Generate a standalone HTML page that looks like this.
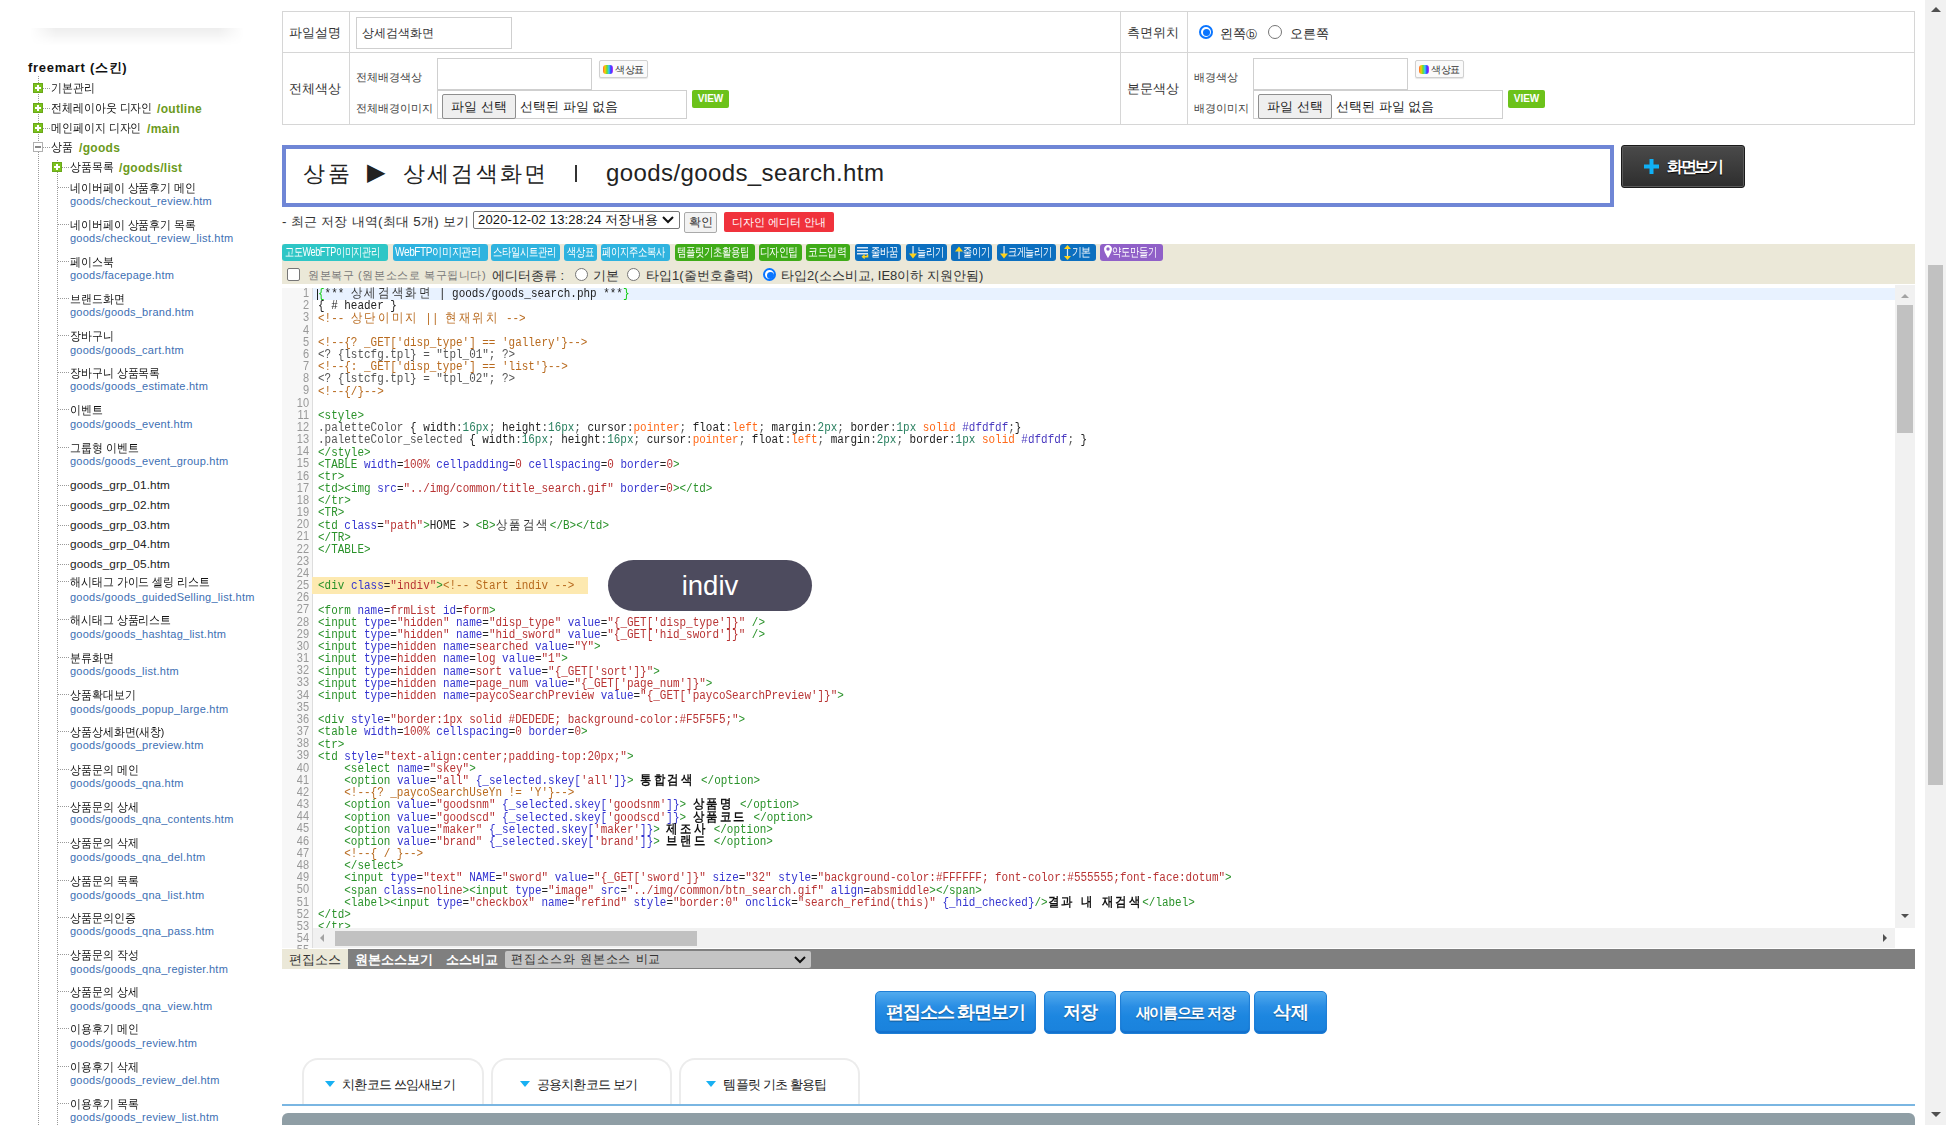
<!DOCTYPE html>
<html><head><meta charset="utf-8"><title>design</title><style>
*{box-sizing:border-box;margin:0;padding:0}
html,body{width:1946px;height:1125px;overflow:hidden;background:#fff;font-family:"Liberation Sans",sans-serif;color:#333;position:relative}
.a{position:absolute;white-space:nowrap}
/* sidebar */
.shadow{position:absolute;left:30px;top:28px;width:214px;height:18px;background:linear-gradient(rgba(0,0,0,.07),rgba(0,0,0,.025) 60%,rgba(0,0,0,0));-webkit-mask-image:linear-gradient(90deg,transparent,#000 12%,#000 88%,transparent)}
.root{font-weight:bold;font-size:13px;color:#111;letter-spacing:0.7px}
.vdot{position:absolute;width:0;border-left:1px dotted #9a9a9a}
.hdot{position:absolute;height:0;border-top:1px dotted #9a9a9a}
.pl{position:absolute;width:10px;height:10px;background:#7cc21e;border:1px solid #6aa81a}
.pl:before{content:"";position:absolute;left:1px;top:3px;width:6px;height:2px;background:#fff}
.pl:after{content:"";position:absolute;left:3px;top:1px;width:2px;height:6px;background:#fff}
.mi{position:absolute;width:10px;height:10px;background:#fff;border:1px solid #b0b0b0}
.mi:before{content:"";position:absolute;left:1px;top:3px;width:6px;height:2px;background:#888}
.t1{font-size:12px;font-weight:500;color:#111;transform:scaleX(.91);transform-origin:0 0}
.gr{color:#6b9a1c;font-weight:bold;font-size:12px;letter-spacing:0.3px}
.ti{font-size:11.5px;font-weight:500;color:#111;transform:scaleX(.91);transform-origin:0 0}.tg2{font-size:11.8px;color:#222;letter-spacing:0.1px}
.pa{font-size:11px;color:#3d6fb3;letter-spacing:0.25px}
/* table */
.tbl{position:absolute;left:282px;top:11px;width:1633px;height:114px;border:1px solid #d6d6d6}
.ln{position:absolute;background:#d6d6d6}
.inp{position:absolute;border:1px solid #cfcfcf;background:#fff}
.lab{font-size:13px;color:#333}
.slab{font-size:11px;color:#444}
.fbtn{position:absolute;background:#efefef;border:1px solid #8f8f8f;border-radius:2px;font-size:13px;color:#222;text-align:center}
.cbtn{position:absolute;height:18px;border:1px solid #d0d0d0;border-radius:2px;background:#fafafa;font-size:10px;color:#333;box-shadow:0 1px 1px rgba(0,0,0,.1)}
.vbtn{position:absolute;height:18px;width:37px;background:#6cc21a;border-radius:2px;color:#fff;font-weight:bold;font-size:10px;text-align:center;line-height:18px}
.radio{position:absolute;width:14px;height:14px;border-radius:50%;border:1px solid #767676;background:#fff}
.radio.on{border:2px solid #0a75ff}
.radio.on:after{content:"";position:absolute;left:1.5px;top:1.5px;width:7px;height:7px;border-radius:50%;background:#0a75ff}
/* title */
.title{position:absolute;left:282px;top:145px;width:1332px;height:62px;border:4px solid #6f86d6;background:#fff}
.ttx{font-size:22px;color:#222}
.vbig{position:absolute;left:1621px;top:145px;width:124px;height:43px;border-radius:3px;background:linear-gradient(#4a4a4a,#2e2e2e);border:1px solid #1a1a1a;box-shadow:inset 0 0 0 1px #5a5a5a;color:#fff;font-weight:bold;font-size:15px}
/* toolbar */
.tb{position:absolute;left:282px;top:244px;width:1633px;height:40px;background:#ebe8d8}
.tbn{white-space:nowrap;position:absolute;top:244px;height:17px;border-radius:3px;color:#fff;font-size:11px;line-height:17px;text-align:center;overflow:hidden;letter-spacing:-0.5px}
.cyan{background:#2ec6c6}.sky{background:#2fb3df}.grn{background:#3fab18}.blu{background:#0c6fbf}.pur{background:#9060c8}
/* editor */
.gut{position:absolute;left:282px;top:288px;width:31px;height:660px;background:#f7f7f7;border-right:1px solid #ddd}
.code{white-space:pre;font-family:"Liberation Mono",monospace;font-size:12.5px;color:#222;line-height:12px;height:12px;transform:scaleX(.876);transform-origin:0 0}
.lnum{position:absolute;left:279px;width:30px;text-align:right;font-family:"Liberation Sans",sans-serif;font-size:12.5px;color:#999;line-height:12px;transform:scaleX(.88);transform-origin:100% 0}
.k{letter-spacing:2.5px}.code .k{font-weight:bold;color:#111}.code .cm .k{font-weight:normal;color:inherit}
.tg{color:#2a922a}.at{color:#3636d0}.st{color:#b83434}.cm{color:#b86a1e}.nu{color:#2a8060}.ato{color:#ff6a1a}.hx{color:#4a3ac0}.mt{color:#555}.br{color:#1c1}
</style></head>
<body>
<div class="shadow"></div>
<div class="a root" style="left:28px;top:59px">freemart (스킨)</div>
<div class="vdot" style="left:38px;top:76px;height:1049px"></div>
<div class="hdot" style="left:43px;top:88px;width:7px"></div>
<div class="pl" style="left:33px;top:83px"></div>
<div class="a t1" style="left:51px;top:80px">기본관리</div>
<div class="hdot" style="left:43px;top:108px;width:7px"></div>
<div class="pl" style="left:33px;top:103px"></div>
<div class="a t1" style="left:51px;top:100px">전체레이아웃 디자인</div>
<div class="a gr" style="left:157px;top:102px">/outline</div>
<div class="hdot" style="left:43px;top:128px;width:7px"></div>
<div class="pl" style="left:33px;top:123px"></div>
<div class="a t1" style="left:51px;top:120px">메인페이지 디자인</div>
<div class="a gr" style="left:147px;top:122px">/main</div>
<div class="hdot" style="left:43px;top:147px;width:7px"></div>
<div class="mi" style="left:33px;top:142px"></div>
<div class="a t1" style="left:51px;top:139px">상품</div>
<div class="a gr" style="left:79px;top:141px">/goods</div>
<div class="vdot" style="left:57px;top:160px;height:965px"></div>
<div class="hdot" style="left:62px;top:167px;width:7px"></div>
<div class="pl" style="left:52px;top:162px"></div>
<div class="a t1" style="left:70px;top:159px">상품목록</div>
<div class="a gr" style="left:119px;top:161px">/goods/list</div>
<div class="hdot" style="left:58px;top:187px;width:11px"></div>
<div class="a ti" style="left:70px;top:181px">네이버페이 상품후기 메인</div>
<div class="a pa" style="left:70px;top:195px">goods/checkout_review.htm</div>
<div class="hdot" style="left:58px;top:224px;width:11px"></div>
<div class="a ti" style="left:70px;top:218px">네이버페이 상품후기 목록</div>
<div class="a pa" style="left:70px;top:232px">goods/checkout_review_list.htm</div>
<div class="hdot" style="left:58px;top:261px;width:11px"></div>
<div class="a ti" style="left:70px;top:255px">페이스북</div>
<div class="a pa" style="left:70px;top:269px">goods/facepage.htm</div>
<div class="hdot" style="left:58px;top:298px;width:11px"></div>
<div class="a ti" style="left:70px;top:292px">브랜드화면</div>
<div class="a pa" style="left:70px;top:306px">goods/goods_brand.htm</div>
<div class="hdot" style="left:58px;top:335px;width:11px"></div>
<div class="a ti" style="left:70px;top:329px">장바구니</div>
<div class="a pa" style="left:70px;top:344px">goods/goods_cart.htm</div>
<div class="hdot" style="left:58px;top:372px;width:11px"></div>
<div class="a ti" style="left:70px;top:366px">장바구니 상품목록</div>
<div class="a pa" style="left:70px;top:380px">goods/goods_estimate.htm</div>
<div class="hdot" style="left:58px;top:409px;width:11px"></div>
<div class="a ti" style="left:70px;top:403px">이벤트</div>
<div class="a pa" style="left:70px;top:418px">goods/goods_event.htm</div>
<div class="hdot" style="left:58px;top:447px;width:11px"></div>
<div class="a ti" style="left:70px;top:441px">그룹형 이벤트</div>
<div class="a pa" style="left:70px;top:455px">goods/goods_event_group.htm</div>
<div class="hdot" style="left:58px;top:485px;width:11px"></div>
<div class="a tg2" style="left:70px;top:478px">goods_grp_01.htm</div>
<div class="hdot" style="left:58px;top:505px;width:11px"></div>
<div class="a tg2" style="left:70px;top:498px">goods_grp_02.htm</div>
<div class="hdot" style="left:58px;top:525px;width:11px"></div>
<div class="a tg2" style="left:70px;top:518px">goods_grp_03.htm</div>
<div class="hdot" style="left:58px;top:544px;width:11px"></div>
<div class="a tg2" style="left:70px;top:537px">goods_grp_04.htm</div>
<div class="hdot" style="left:58px;top:564px;width:11px"></div>
<div class="a tg2" style="left:70px;top:557px">goods_grp_05.htm</div>
<div class="hdot" style="left:58px;top:581px;width:11px"></div>
<div class="a ti" style="left:70px;top:575px">해시태그 가이드 셀링 리스트</div>
<div class="a pa" style="left:70px;top:591px">goods/goods_guidedSelling_list.htm</div>
<div class="hdot" style="left:58px;top:619px;width:11px"></div>
<div class="a ti" style="left:70px;top:613px">해시태그 상품리스트</div>
<div class="a pa" style="left:70px;top:628px">goods/goods_hashtag_list.htm</div>
<div class="hdot" style="left:58px;top:657px;width:11px"></div>
<div class="a ti" style="left:70px;top:651px">분류화면</div>
<div class="a pa" style="left:70px;top:665px">goods/goods_list.htm</div>
<div class="hdot" style="left:58px;top:694px;width:11px"></div>
<div class="a ti" style="left:70px;top:688px">상품확대보기</div>
<div class="a pa" style="left:70px;top:703px">goods/goods_popup_large.htm</div>
<div class="hdot" style="left:58px;top:731px;width:11px"></div>
<div class="a ti" style="left:70px;top:725px">상품상세화면(새창)</div>
<div class="a pa" style="left:70px;top:739px">goods/goods_preview.htm</div>
<div class="hdot" style="left:58px;top:769px;width:11px"></div>
<div class="a ti" style="left:70px;top:763px">상품문의 메인</div>
<div class="a pa" style="left:70px;top:777px">goods/goods_qna.htm</div>
<div class="hdot" style="left:58px;top:806px;width:11px"></div>
<div class="a ti" style="left:70px;top:800px">상품문의 상세</div>
<div class="a pa" style="left:70px;top:813px">goods/goods_qna_contents.htm</div>
<div class="hdot" style="left:58px;top:842px;width:11px"></div>
<div class="a ti" style="left:70px;top:836px">상품문의 삭제</div>
<div class="a pa" style="left:70px;top:851px">goods/goods_qna_del.htm</div>
<div class="hdot" style="left:58px;top:880px;width:11px"></div>
<div class="a ti" style="left:70px;top:874px">상품문의 목록</div>
<div class="a pa" style="left:70px;top:889px">goods/goods_qna_list.htm</div>
<div class="hdot" style="left:58px;top:917px;width:11px"></div>
<div class="a ti" style="left:70px;top:911px">상품문의인증</div>
<div class="a pa" style="left:70px;top:925px">goods/goods_qna_pass.htm</div>
<div class="hdot" style="left:58px;top:954px;width:11px"></div>
<div class="a ti" style="left:70px;top:948px">상품문의 작성</div>
<div class="a pa" style="left:70px;top:963px">goods/goods_qna_register.htm</div>
<div class="hdot" style="left:58px;top:991px;width:11px"></div>
<div class="a ti" style="left:70px;top:985px">상품문의 상세</div>
<div class="a pa" style="left:70px;top:1000px">goods/goods_qna_view.htm</div>
<div class="hdot" style="left:58px;top:1028px;width:11px"></div>
<div class="a ti" style="left:70px;top:1022px">이용후기 메인</div>
<div class="a pa" style="left:70px;top:1037px">goods/goods_review.htm</div>
<div class="hdot" style="left:58px;top:1066px;width:11px"></div>
<div class="a ti" style="left:70px;top:1060px">이용후기 삭제</div>
<div class="a pa" style="left:70px;top:1074px">goods/goods_review_del.htm</div>
<div class="hdot" style="left:58px;top:1103px;width:11px"></div>
<div class="a ti" style="left:70px;top:1097px">이용후기 목록</div>
<div class="a pa" style="left:70px;top:1111px">goods/goods_review_list.htm</div>
<div class="tbl"></div>
<div class="ln" style="left:349px;top:11px;width:1px;height:114px"></div>
<div class="ln" style="left:1120px;top:11px;width:1px;height:114px"></div>
<div class="ln" style="left:1187px;top:11px;width:1px;height:114px"></div>
<div class="ln" style="left:282px;top:52px;width:1633px;height:1px"></div>
<div class="a lab" style="left:289px;top:24px">파일설명</div>
<div class="a lab" style="left:289px;top:80px">전체색상</div>
<div class="a lab" style="left:1127px;top:24px">측면위치</div>
<div class="a lab" style="left:1127px;top:80px">본문색상</div>
<div class="inp" style="left:356px;top:17px;width:156px;height:32px"></div>
<div class="a" style="left:362px;top:25px;font-size:12px;color:#333">상세검색화면</div>
<div class="a slab" style="left:356px;top:70px">전체배경색상</div>
<div class="a slab" style="left:356px;top:101px">전체배경이미지</div>
<div class="inp" style="left:437px;top:58px;width:155px;height:32px"></div>
<div class="inp" style="left:437px;top:90px;width:250px;height:29px"></div>
<div class="fbtn" style="left:442px;top:94px;width:74px;height:25px;line-height:23px">파일 선택</div>
<div class="a" style="left:520px;top:98px;font-size:13px;color:#222">선택된 파일 없음</div>
<div class="cbtn" style="left:599px;top:60px;width:49px"><span style="position:absolute;left:3px;top:4px;width:10px;height:9px;border-radius:3px;background:linear-gradient(90deg,#f63,#fc0,#6d3,#3cf,#33f,#c3f)"></span><span style="position:absolute;left:15px;top:2px;letter-spacing:-0.5px">색상표</span></div>
<div class="vbtn" style="left:692px;top:90px">VIEW</div>
<div class="a slab" style="left:1194px;top:70px">배경색상</div>
<div class="a slab" style="left:1194px;top:101px">배경이미지</div>
<div class="inp" style="left:1253px;top:58px;width:155px;height:32px"></div>
<div class="inp" style="left:1253px;top:90px;width:250px;height:29px"></div>
<div class="fbtn" style="left:1258px;top:94px;width:74px;height:25px;line-height:23px">파일 선택</div>
<div class="a" style="left:1336px;top:98px;font-size:13px;color:#222">선택된 파일 없음</div>
<div class="cbtn" style="left:1415px;top:60px;width:49px"><span style="position:absolute;left:3px;top:4px;width:10px;height:9px;border-radius:3px;background:linear-gradient(90deg,#f63,#fc0,#6d3,#3cf,#33f,#c3f)"></span><span style="position:absolute;left:15px;top:2px;letter-spacing:-0.5px">색상표</span></div>
<div class="vbtn" style="left:1508px;top:90px">VIEW</div>
<div class="radio on" style="left:1199px;top:25px"></div>
<div class="a" style="left:1220px;top:25px;font-size:13px;color:#222">왼쪽<span style="font-size:11px">ⓑ</span></div>
<div class="radio" style="left:1268px;top:25px"></div>
<div class="a" style="left:1290px;top:25px;font-size:13px;color:#222">오른쪽</div>
<div class="title"></div>
<div class="a ttx" style="left:303px;top:159px;letter-spacing:3px">상품</div>
<div class="a ttx" style="left:367px;top:158px;font-size:24px">▶</div>
<div class="a ttx" style="left:403px;top:159px;letter-spacing:2.2px">상세검색화면</div>
<div class="a" style="left:575px;top:165px;width:2px;height:17px;background:#333"></div>
<div class="a ttx" style="left:606px;top:159px;font-size:24px;letter-spacing:0.4px">goods/goods_search.htm</div>
<div class="vbig"><svg style="position:absolute;left:22px;top:13px" width="15" height="15" viewBox="0 0 15 15"><path d="M5.5 0h4v5.5H15v4H9.5V15h-4V9.5H0v-4h5.5z" fill="#10b0f5"/></svg><span style="position:absolute;left:45px;top:11px;font-size:16px;letter-spacing:-2.4px;text-shadow:0 1px 1px #000">화면보기</span></div>
<div class="a" style="left:282px;top:213px;font-size:13.4px;letter-spacing:0.25px;color:#333">- 최근 저장 내역(최대 5개) 보기</div>
<div class="a" style="left:473px;top:211px;width:207px;height:18px;border:1px solid #767676;border-radius:2px;font-size:13px;letter-spacing:0.15px;color:#111;padding-left:4px;line-height:16px">2020-12-02 13:28:24 저장내용<svg style="position:absolute;left:188px;top:4px" width="12" height="8" viewBox="0 0 12 8"><path d="M1 1l5 5 5-5" stroke="#111" stroke-width="2" fill="none"/></svg></div>
<div class="a" style="left:684px;top:212px;width:33px;height:21px;border:1px solid #aaa;background:#f2f2f2;border-radius:2px;font-size:12px;color:#333;text-align:center;line-height:19px">확인</div>
<div class="a" style="left:724px;top:212px;width:110px;height:20px;background:#f0323c;border-radius:2px;font-size:11px;color:#fff;text-align:center;line-height:20px">디자인 에디터 안내</div>
<div class="tb"></div>
<div class="tbn cyan" style="left:282px;width:106px"><span style="position:absolute;left:2.9px;top:0;transform:scaleX(0.758);transform-origin:0 0;font-size:12px">고도WebFTP이미지관리</span></div>
<div class="tbn sky" style="left:393px;width:95px"><span style="position:absolute;left:2.1px;top:0;transform:scaleX(0.842);transform-origin:0 0;font-size:12px">WebFTP이미지관리</span></div>
<div class="tbn sky" style="left:491px;width:69px"><span style="position:absolute;left:2.0px;top:0;transform:scaleX(0.780);transform-origin:0 0;font-size:12px">스타일시트관리</span></div>
<div class="tbn sky" style="left:564px;width:33px"><span style="position:absolute;left:2.5px;top:0;transform:scaleX(0.772);transform-origin:0 0;font-size:12px">색상표</span></div>
<div class="tbn sky" style="left:601px;width:69px"><span style="position:absolute;left:1.3px;top:0;transform:scaleX(0.776);transform-origin:0 0;font-size:12px">페이지주소복사</span></div>
<div class="tbn grn" style="left:675px;width:80px"><span style="position:absolute;left:2.2px;top:0;transform:scaleX(0.787);transform-origin:0 0;font-size:12px">템플릿기초활용팁</span></div>
<div class="tbn grn" style="left:759px;width:43px"><span style="position:absolute;left:1.3px;top:0;transform:scaleX(0.823);transform-origin:0 0;font-size:12px">디자인팁</span></div>
<div class="tbn grn" style="left:806px;width:44px"><span style="position:absolute;left:1.8px;top:0;transform:scaleX(0.827);transform-origin:0 0;font-size:12px">코드입력</span></div>
<div class="tbn blu" style="left:855px;width:46px"><span style="position:absolute;left:15.9px;top:0;transform:scaleX(0.775);transform-origin:0 0;font-size:12px">줄바꿈</span></div>
<div class="tbn blu" style="left:906px;width:41px"><span style="position:absolute;left:11.3px;top:0;transform:scaleX(0.767);transform-origin:0 0;font-size:12px">늘리기</span></div>
<div class="tbn blu" style="left:951px;width:41px"><span style="position:absolute;left:11.7px;top:0;transform:scaleX(0.761);transform-origin:0 0;font-size:12px">줄이기</span></div>
<div class="tbn blu" style="left:997px;width:59px"><span style="position:absolute;left:11.2px;top:0;transform:scaleX(0.755);transform-origin:0 0;font-size:12px">크게늘리기</span></div>
<div class="tbn blu" style="left:1060px;width:36px"><span style="position:absolute;left:11.5px;top:0;transform:scaleX(0.825);transform-origin:0 0;font-size:12px">기본</span></div>
<div class="tbn pur" style="left:1100px;width:63px"><span style="position:absolute;left:12.3px;top:0;transform:scaleX(0.773);transform-origin:0 0;font-size:12px">약도만들기</span></div>
<svg class="a" style="left:857px;top:246px" width="14" height="14" viewBox="0 0 14 14"><rect x="0" y="1" width="11" height="1.5" fill="#d6e6f6"/><rect x="0" y="4" width="11" height="1.5" fill="#d6e6f6"/><rect x="0" y="7" width="11" height="1.5" fill="#d6e6f6"/><path d="M10.5 8.5v2.2H7" stroke="#ffd21a" stroke-width="1.6" fill="none"/><path d="M4.5 10.7l3.2-2.6v5.2z" fill="#ffd21a"/></svg>
<svg class="a" style="left:909px;top:246px" width="8" height="13" viewBox="0 0 8 13"><rect x="3.4" y="0" width="1.3" height="8" fill="#d6e6f6"/><path d="M4 12.5L0 7.5h8z" fill="#ffd21a"/></svg>
<svg class="a" style="left:955px;top:246px" width="8" height="13" viewBox="0 0 8 13"><rect x="3.4" y="5" width="1.3" height="8" fill="#d6e6f6"/><path d="M4 0.5L0 5.5h8z" fill="#ffd21a"/></svg>
<svg class="a" style="left:1000px;top:246px" width="8" height="13" viewBox="0 0 8 13"><rect x="3.4" y="0" width="1.3" height="8" fill="#d6e6f6"/><path d="M4 12.5L0 7.5h8z" fill="#ffd21a"/></svg>
<svg class="a" style="left:1064px;top:245px" width="7" height="15" viewBox="0 0 7 15"><rect x="2.9" y="3" width="1.2" height="9" fill="#d6e6f6"/><path d="M3.5 0L0 4h7zM3.5 15L0 11h7z" fill="#ffd21a"/></svg>
<svg class="a" style="left:1104px;top:245px" width="8" height="13" viewBox="0 0 8 13"><path d="M4 0C1.8 0 0 1.8 0 4c0 3 4 9 4 9s4-6 4-9c0-2.2-1.8-4-4-4zm0 2.3a1.7 1.7 0 110 3.4 1.7 1.7 0 010-3.4z" fill="#fff"/></svg>
<div class="a" style="left:287px;top:268px;width:13px;height:13px;border:1px solid #767676;border-radius:2px;background:#fff"></div>
<div class="a" style="left:308px;top:268px;font-size:11px;letter-spacing:0.6px;color:#777">원본복구 (원본소스로 복구됩니다)</div>
<div class="a" style="left:492px;top:267px;font-size:13px;color:#333">에디터종류 :</div>
<div class="radio" style="left:575px;top:268px;width:13px;height:13px"></div>
<div class="a" style="left:593px;top:267px;font-size:13px;color:#333">기본</div>
<div class="radio" style="left:627px;top:268px;width:13px;height:13px"></div>
<div class="a" style="left:646px;top:267px;font-size:13px;color:#333">타입1(줄번호출력)</div>
<div class="radio on" style="left:763px;top:268px;width:13px;height:13px"></div>
<div class="a" style="left:781px;top:267px;font-size:13px;color:#333">타입2(소스비교, IE8이하 지원안됨)</div>
<div class="gut"></div>
<div class="a" style="left:313px;top:288px;width:1582px;height:12px;background:#e8f2ff"></div>
<div class="a" style="left:312px;top:577px;width:276px;height:17px;background:#fde9b0"></div>
<div class="lnum" style="top:287.00px">1</div>
<div class="a code" style="left:318px;top:288.30px"><span style="position:absolute;left:-1px;top:1px;width:1px;height:11px;background:#000"></span><span class="br">{</span>*** <span class="k" style="font-weight:normal;color:#333">상세검색화면</span> | goods/goods_search.php ***<span class="br">}</span></div>
<div class="lnum" style="top:299.17px">2</div>
<div class="a code" style="left:318px;top:300.47px">{ # header }</div>
<div class="lnum" style="top:311.34px">3</div>
<div class="a code" style="left:318px;top:312.64px"><span class="cm">&lt;!-- <span class="k">상단이미지</span> || <span class="k">현재위치</span> --&gt;</span></div>
<div class="lnum" style="top:323.51px">4</div>
<div class="lnum" style="top:335.68px">5</div>
<div class="a code" style="left:318px;top:336.98px"><span class="cm">&lt;!--{? _GET['disp_type'] == 'gallery'}--&gt;</span></div>
<div class="lnum" style="top:347.85px">6</div>
<div class="a code" style="left:318px;top:349.15px"><span class="mt">&lt;? {lstcfg.tpl} = "tpl_01"; ?&gt;</span></div>
<div class="lnum" style="top:360.02px">7</div>
<div class="a code" style="left:318px;top:361.32px"><span class="cm">&lt;!--{: _GET['disp_type'] == 'list'}--&gt;</span></div>
<div class="lnum" style="top:372.19px">8</div>
<div class="a code" style="left:318px;top:373.49px"><span class="mt">&lt;? {lstcfg.tpl} = "tpl_02"; ?&gt;</span></div>
<div class="lnum" style="top:384.36px">9</div>
<div class="a code" style="left:318px;top:385.66px"><span class="cm">&lt;!--{/}--&gt;</span></div>
<div class="lnum" style="top:396.53px">10</div>
<div class="lnum" style="top:408.70px">11</div>
<div class="a code" style="left:318px;top:410.00px"><span class="tg">&lt;style</span><span class="tg">&gt;</span></div>
<div class="lnum" style="top:420.87px">12</div>
<div class="a code" style="left:318px;top:422.17px"><span class="mt">.paletteColor</span> { width<span class="mt">:</span><span class="nu">16px</span><span class="mt">;</span> height<span class="mt">:</span><span class="nu">16px</span><span class="mt">;</span> cursor<span class="mt">:</span><span class="ato">pointer</span><span class="mt">;</span> float<span class="mt">:</span><span class="ato">left</span><span class="mt">;</span> margin<span class="mt">:</span><span class="nu">2px</span><span class="mt">;</span> border<span class="mt">:</span><span class="nu">1px</span> <span class="ato">solid</span> <span class="hx">#dfdfdf</span><span class="mt">;</span>}</div>
<div class="lnum" style="top:433.04px">13</div>
<div class="a code" style="left:318px;top:434.34px"><span class="mt">.paletteColor_selected</span> { width<span class="mt">:</span><span class="nu">16px</span><span class="mt">;</span> height<span class="mt">:</span><span class="nu">16px</span><span class="mt">;</span> cursor<span class="mt">:</span><span class="ato">pointer</span><span class="mt">;</span> float<span class="mt">:</span><span class="ato">left</span><span class="mt">;</span> margin<span class="mt">:</span><span class="nu">2px</span><span class="mt">;</span> border<span class="mt">:</span><span class="nu">1px</span> <span class="ato">solid</span> <span class="hx">#dfdfdf</span><span class="mt">;</span> }</div>
<div class="lnum" style="top:445.21px">14</div>
<div class="a code" style="left:318px;top:446.51px"><span class="tg">&lt;/style</span><span class="tg">&gt;</span></div>
<div class="lnum" style="top:457.38px">15</div>
<div class="a code" style="left:318px;top:458.68px"><span class="tg">&lt;TABLE</span> <span class="at">width</span>=<span class="st">100%</span> <span class="at">cellpadding</span>=<span class="st">0</span> <span class="at">cellspacing</span>=<span class="st">0</span> <span class="at">border</span>=<span class="st">0</span><span class="tg">&gt;</span></div>
<div class="lnum" style="top:469.55px">16</div>
<div class="a code" style="left:318px;top:470.85px"><span class="tg">&lt;tr</span><span class="tg">&gt;</span></div>
<div class="lnum" style="top:481.72px">17</div>
<div class="a code" style="left:318px;top:483.02px"><span class="tg">&lt;td</span><span class="tg">&gt;</span><span class="tg">&lt;img</span> <span class="at">src</span>=<span class="st">"../img/common/title_search.gif"</span> <span class="at">border</span>=<span class="st">0</span><span class="tg">&gt;</span><span class="tg">&lt;/td</span><span class="tg">&gt;</span></div>
<div class="lnum" style="top:493.89px">18</div>
<div class="a code" style="left:318px;top:495.19px"><span class="tg">&lt;/tr</span><span class="tg">&gt;</span></div>
<div class="lnum" style="top:506.06px">19</div>
<div class="a code" style="left:318px;top:507.36px"><span class="tg">&lt;TR</span><span class="tg">&gt;</span></div>
<div class="lnum" style="top:518.23px">20</div>
<div class="a code" style="left:318px;top:519.53px"><span class="tg">&lt;td</span> <span class="at">class</span>=<span class="st">"path"</span><span class="tg">&gt;</span>HOME &gt; <span class="tg">&lt;B</span><span class="tg">&gt;</span><span class="k" style="font-weight:normal;color:#333">상품검색</span><span class="tg">&lt;/B</span><span class="tg">&gt;</span><span class="tg">&lt;/td</span><span class="tg">&gt;</span></div>
<div class="lnum" style="top:530.40px">21</div>
<div class="a code" style="left:318px;top:531.70px"><span class="tg">&lt;/TR</span><span class="tg">&gt;</span></div>
<div class="lnum" style="top:542.57px">22</div>
<div class="a code" style="left:318px;top:543.87px"><span class="tg">&lt;/TABLE</span><span class="tg">&gt;</span></div>
<div class="lnum" style="top:554.74px">23</div>
<div class="lnum" style="top:566.91px">24</div>
<div class="lnum" style="top:579.08px">25</div>
<div class="a code" style="left:318px;top:580.38px"><span class="tg">&lt;div</span> <span class="at">class</span>=<span class="st">"indiv"</span><span class="tg">&gt;</span><span class="cm">&lt;!-- Start indiv --&gt;</span></div>
<div class="lnum" style="top:591.25px">26</div>
<div class="lnum" style="top:603.42px">27</div>
<div class="a code" style="left:318px;top:604.72px"><span class="tg">&lt;form</span> <span class="at">name</span>=<span class="st">frmList</span> <span class="at">id</span>=<span class="st">form</span><span class="tg">&gt;</span></div>
<div class="lnum" style="top:615.59px">28</div>
<div class="a code" style="left:318px;top:616.89px"><span class="tg">&lt;input</span> <span class="at">type</span>=<span class="st">"hidden"</span> <span class="at">name</span>=<span class="st">"disp_type"</span> <span class="at">value</span>=<span class="st">"{_GET['disp_type']}"</span> <span class="tg">/&gt;</span></div>
<div class="lnum" style="top:627.76px">29</div>
<div class="a code" style="left:318px;top:629.06px"><span class="tg">&lt;input</span> <span class="at">type</span>=<span class="st">"hidden"</span> <span class="at">name</span>=<span class="st">"hid_sword"</span> <span class="at">value</span>=<span class="st">"{_GET['hid_sword']}"</span> <span class="tg">/&gt;</span></div>
<div class="lnum" style="top:639.93px">30</div>
<div class="a code" style="left:318px;top:641.23px"><span class="tg">&lt;input</span> <span class="at">type</span>=<span class="st">hidden</span> <span class="at">name</span>=<span class="st">searched</span> <span class="at">value</span>=<span class="st">"Y"</span><span class="tg">&gt;</span></div>
<div class="lnum" style="top:652.10px">31</div>
<div class="a code" style="left:318px;top:653.40px"><span class="tg">&lt;input</span> <span class="at">type</span>=<span class="st">hidden</span> <span class="at">name</span>=<span class="st">log</span> <span class="at">value</span>=<span class="st">"1"</span><span class="tg">&gt;</span></div>
<div class="lnum" style="top:664.27px">32</div>
<div class="a code" style="left:318px;top:665.57px"><span class="tg">&lt;input</span> <span class="at">type</span>=<span class="st">hidden</span> <span class="at">name</span>=<span class="st">sort</span> <span class="at">value</span>=<span class="st">"{_GET['sort']}"</span><span class="tg">&gt;</span></div>
<div class="lnum" style="top:676.44px">33</div>
<div class="a code" style="left:318px;top:677.74px"><span class="tg">&lt;input</span> <span class="at">type</span>=<span class="st">hidden</span> <span class="at">name</span>=<span class="st">page_num</span> <span class="at">value</span>=<span class="st">"{_GET['page_num']}"</span><span class="tg">&gt;</span></div>
<div class="lnum" style="top:688.61px">34</div>
<div class="a code" style="left:318px;top:689.91px"><span class="tg">&lt;input</span> <span class="at">type</span>=<span class="st">hidden</span> <span class="at">name</span>=<span class="st">paycoSearchPreview</span> <span class="at">value</span>=<span class="st">"{_GET['paycoSearchPreview']}"</span><span class="tg">&gt;</span></div>
<div class="lnum" style="top:700.78px">35</div>
<div class="lnum" style="top:712.95px">36</div>
<div class="a code" style="left:318px;top:714.25px"><span class="tg">&lt;div</span> <span class="at">style</span>=<span class="st">"border:1px solid #DEDEDE; background-color:#F5F5F5;"</span><span class="tg">&gt;</span></div>
<div class="lnum" style="top:725.12px">37</div>
<div class="a code" style="left:318px;top:726.42px"><span class="tg">&lt;table</span> <span class="at">width</span>=<span class="st">100%</span> <span class="at">cellspacing</span>=<span class="st">0</span> <span class="at">border</span>=<span class="st">0</span><span class="tg">&gt;</span></div>
<div class="lnum" style="top:737.29px">38</div>
<div class="a code" style="left:318px;top:738.59px"><span class="tg">&lt;tr</span><span class="tg">&gt;</span></div>
<div class="lnum" style="top:749.46px">39</div>
<div class="a code" style="left:318px;top:750.76px"><span class="tg">&lt;td</span> <span class="at">style</span>=<span class="st">"text-align:center;padding-top:20px;"</span><span class="tg">&gt;</span></div>
<div class="lnum" style="top:761.63px">40</div>
<div class="a code" style="left:318px;top:762.93px">    <span class="tg">&lt;select</span> <span class="at">name</span>=<span class="st">"skey"</span><span class="tg">&gt;</span></div>
<div class="lnum" style="top:773.80px">41</div>
<div class="a code" style="left:318px;top:775.10px">    <span class="tg">&lt;option</span> <span class="at">value</span>=<span class="st">"all"</span> <span class="at">{_selected.skey[</span><span class="st">'all'</span><span class="at">]}</span><span class="tg">&gt;</span> <span class="k">통합검색</span> <span class="tg">&lt;/option</span><span class="tg">&gt;</span></div>
<div class="lnum" style="top:785.97px">42</div>
<div class="a code" style="left:318px;top:787.27px">    <span class="cm">&lt;!--{? _paycoSearchUseYn != 'Y'}--&gt;</span></div>
<div class="lnum" style="top:798.14px">43</div>
<div class="a code" style="left:318px;top:799.44px">    <span class="tg">&lt;option</span> <span class="at">value</span>=<span class="st">"goodsnm"</span> <span class="at">{_selected.skey[</span><span class="st">'goodsnm'</span><span class="at">]}</span><span class="tg">&gt;</span> <span class="k">상품명</span> <span class="tg">&lt;/option</span><span class="tg">&gt;</span></div>
<div class="lnum" style="top:810.31px">44</div>
<div class="a code" style="left:318px;top:811.61px">    <span class="tg">&lt;option</span> <span class="at">value</span>=<span class="st">"goodscd"</span> <span class="at">{_selected.skey[</span><span class="st">'goodscd'</span><span class="at">]}</span><span class="tg">&gt;</span> <span class="k">상품코드</span> <span class="tg">&lt;/option</span><span class="tg">&gt;</span></div>
<div class="lnum" style="top:822.48px">45</div>
<div class="a code" style="left:318px;top:823.78px">    <span class="tg">&lt;option</span> <span class="at">value</span>=<span class="st">"maker"</span> <span class="at">{_selected.skey[</span><span class="st">'maker'</span><span class="at">]}</span><span class="tg">&gt;</span> <span class="k">제조사</span> <span class="tg">&lt;/option</span><span class="tg">&gt;</span></div>
<div class="lnum" style="top:834.65px">46</div>
<div class="a code" style="left:318px;top:835.95px">    <span class="tg">&lt;option</span> <span class="at">value</span>=<span class="st">"brand"</span> <span class="at">{_selected.skey[</span><span class="st">'brand'</span><span class="at">]}</span><span class="tg">&gt;</span> <span class="k">브랜드</span> <span class="tg">&lt;/option</span><span class="tg">&gt;</span></div>
<div class="lnum" style="top:846.82px">47</div>
<div class="a code" style="left:318px;top:848.12px">    <span class="cm">&lt;!--{ / }--&gt;</span></div>
<div class="lnum" style="top:858.99px">48</div>
<div class="a code" style="left:318px;top:860.29px">    <span class="tg">&lt;/select</span><span class="tg">&gt;</span></div>
<div class="lnum" style="top:871.16px">49</div>
<div class="a code" style="left:318px;top:872.46px">    <span class="tg">&lt;input</span> <span class="at">type</span>=<span class="st">"text"</span> <span class="at">NAME</span>=<span class="st">"sword"</span> <span class="at">value</span>=<span class="st">"{_GET['sword']}"</span> <span class="at">size</span>=<span class="st">"32"</span> <span class="at">style</span>=<span class="st">"background-color:#FFFFFF; font-color:#555555;font-face:dotum"</span><span class="tg">&gt;</span></div>
<div class="lnum" style="top:883.33px">50</div>
<div class="a code" style="left:318px;top:884.63px">    <span class="tg">&lt;span</span> <span class="at">class</span>=<span class="st">noline</span><span class="tg">&gt;</span><span class="tg">&lt;input</span> <span class="at">type</span>=<span class="st">"image"</span> <span class="at">src</span>=<span class="st">"../img/common/btn_search.gif"</span> <span class="at">align</span>=<span class="st">absmiddle</span><span class="tg">&gt;</span><span class="tg">&lt;/span</span><span class="tg">&gt;</span></div>
<div class="lnum" style="top:895.50px">51</div>
<div class="a code" style="left:318px;top:896.80px">    <span class="tg">&lt;label</span><span class="tg">&gt;</span><span class="tg">&lt;input</span> <span class="at">type</span>=<span class="st">"checkbox"</span> <span class="at">name</span>=<span class="st">"refind"</span> <span class="at">style</span>=<span class="st">"border:0"</span> <span class="at">onclick</span>=<span class="st">"search_refind(this)"</span> <span class="at">{_hid_checked}</span><span class="tg">/&gt;</span><span class="k">결과</span> <span class="k">내</span> <span class="k">재검색</span><span class="tg">&lt;/label</span><span class="tg">&gt;</span></div>
<div class="lnum" style="top:907.67px">52</div>
<div class="a code" style="left:318px;top:908.97px"><span class="tg">&lt;/td</span><span class="tg">&gt;</span></div>
<div class="lnum" style="top:919.84px">53</div>
<div class="a code" style="left:318px;top:921.14px"><span class="tg">&lt;/tr</span><span class="tg">&gt;</span></div>
<div class="lnum" style="top:932.01px">54</div>
<div class="lnum" style="top:944.18px">55</div>
<div class="a" style="left:1895px;top:285px;width:20px;height:643px;background:#f1f1f1"></div>
<div class="a" style="left:1897px;top:305px;width:16px;height:128px;background:#c1c1c1"></div>
<div class="a" style="left:1901px;top:294px;width:0;height:0;border-left:4px solid transparent;border-right:4px solid transparent;border-bottom:4px solid #a3a3a3"></div>
<div class="a" style="left:1901px;top:914px;width:0;height:0;border-left:4px solid transparent;border-right:4px solid transparent;border-top:4px solid #505050"></div>
<div class="a" style="left:313px;top:928px;width:1582px;height:20px;background:#f1f1f1"></div>
<div class="a" style="left:335px;top:931px;width:362px;height:15px;background:#c1c1c1"></div>
<div class="a" style="left:320px;top:934px;width:0;height:0;border-top:4px solid transparent;border-bottom:4px solid transparent;border-right:4px solid #a3a3a3"></div>
<div class="a" style="left:1883px;top:934px;width:0;height:0;border-top:4px solid transparent;border-bottom:4px solid transparent;border-left:4px solid #505050"></div>
<div class="a" style="left:282px;top:949px;width:1633px;height:20px;background:#7f7f7f"></div>
<div class="a" style="left:282px;top:949px;width:66px;height:20px;background:#ebe8d8"></div>
<div class="a" style="left:289px;top:951px;font-size:13px;color:#333">편집소스</div>
<div class="a" style="left:355px;top:951px;font-size:13px;color:#fff;font-weight:bold">원본소스보기</div>
<div class="a" style="left:446px;top:951px;font-size:13px;color:#fff;font-weight:bold">소스비교</div>
<div class="a" style="left:505px;top:951px;width:306px;height:17px;background:#c4c4c4;border-radius:2px;font-size:12px;color:#333;padding-left:6px;letter-spacing:0.9px;line-height:17px">편집소스와 원본소스 비교<svg style="position:absolute;left:289px;top:5px" width="12" height="8" viewBox="0 0 12 8"><path d="M1 1l5 5 5-5" stroke="#111" stroke-width="2" fill="none"/></svg></div>
<div class="a" style="left:875px;top:991px;width:161px;height:43px;border-radius:5px;background:linear-gradient(#52abee,#2a8ee4 35%,#1c86e0 60%,#1a82dc);border:1px solid #1f7fd6;box-shadow:inset 0 -2px 1px rgba(0,60,160,.25);color:#fff;font-weight:bold;font-size:17.5px;letter-spacing:-1.2px;text-align:center;line-height:41px;text-shadow:0 1px 1px rgba(0,0,0,.35)">편집소스 화면보기</div>
<div class="a" style="left:1044px;top:991px;width:72px;height:43px;border-radius:5px;background:linear-gradient(#52abee,#2a8ee4 35%,#1c86e0 60%,#1a82dc);border:1px solid #1f7fd6;box-shadow:inset 0 -2px 1px rgba(0,60,160,.25);color:#fff;font-weight:bold;font-size:18px;letter-spacing:-0.5px;text-align:center;line-height:41px;text-shadow:0 1px 1px rgba(0,0,0,.35)">저장</div>
<div class="a" style="left:1120px;top:991px;width:130px;height:43px;border-radius:5px;background:linear-gradient(#52abee,#2a8ee4 35%,#1c86e0 60%,#1a82dc);border:1px solid #1f7fd6;box-shadow:inset 0 -2px 1px rgba(0,60,160,.25);color:#fff;font-weight:bold;font-size:15px;letter-spacing:-1.3px;text-align:center;line-height:41px;text-shadow:0 1px 1px rgba(0,0,0,.35)">새이름으로 저장</div>
<div class="a" style="left:1254px;top:991px;width:73px;height:43px;border-radius:5px;background:linear-gradient(#52abee,#2a8ee4 35%,#1c86e0 60%,#1a82dc);border:1px solid #1f7fd6;box-shadow:inset 0 -2px 1px rgba(0,60,160,.25);color:#fff;font-weight:bold;font-size:18px;letter-spacing:-0.5px;text-align:center;line-height:41px;text-shadow:0 1px 1px rgba(0,0,0,.35)">삭제</div>
<div class="a" style="left:302px;top:1058px;width:182px;height:48px;border:2px solid #ececec;border-bottom:none;border-radius:16px 16px 0 0;background:#fff"></div>
<div class="a" style="left:299px;top:1076px;width:182px;text-align:center;font-size:13px;letter-spacing:-0.8px;color:#222"><span style="display:inline-block;width:0;height:0;border-left:5px solid transparent;border-right:5px solid transparent;border-top:6px solid #18b0f2;margin-right:7px;vertical-align:2px"></span>치환코드 쓰임새보기</div>
<div class="a" style="left:491px;top:1058px;width:181px;height:48px;border:2px solid #ececec;border-bottom:none;border-radius:16px 16px 0 0;background:#fff"></div>
<div class="a" style="left:488px;top:1076px;width:181px;text-align:center;font-size:13px;letter-spacing:-0.8px;color:#222"><span style="display:inline-block;width:0;height:0;border-left:5px solid transparent;border-right:5px solid transparent;border-top:6px solid #18b0f2;margin-right:7px;vertical-align:2px"></span>공용치환코드 보기</div>
<div class="a" style="left:679px;top:1058px;width:181px;height:48px;border:2px solid #ececec;border-bottom:none;border-radius:16px 16px 0 0;background:#fff"></div>
<div class="a" style="left:676px;top:1076px;width:181px;text-align:center;font-size:13px;letter-spacing:-0.8px;color:#222"><span style="display:inline-block;width:0;height:0;border-left:5px solid transparent;border-right:5px solid transparent;border-top:6px solid #18b0f2;margin-right:7px;vertical-align:2px"></span>템플릿 기초 활용팁</div>
<div class="a" style="left:282px;top:1104px;width:1633px;height:2px;background:#7ab6e2"></div>
<div class="a" style="left:282px;top:1113px;width:1633px;height:20px;background:#8f9ea5;border-radius:6px 6px 0 0"></div>
<div class="a" style="left:1925px;top:0;width:21px;height:1125px;background:#f1f1f1"></div>
<div class="a" style="left:1928px;top:265px;width:15px;height:520px;background:#c1c1c1"></div>
<div class="a" style="left:1931px;top:7px;width:0;height:0;border-left:5px solid transparent;border-right:5px solid transparent;border-bottom:5px solid #505050"></div>
<div class="a" style="left:1931px;top:1112px;width:0;height:0;border-left:5px solid transparent;border-right:5px solid transparent;border-top:5px solid #505050"></div>
<div class="a" style="left:608px;top:560px;width:204px;height:51px;border-radius:26px;background:#4d4b5e;color:#fff;font-size:27.5px;text-align:center;line-height:51px">indiv</div>
</body></html>
